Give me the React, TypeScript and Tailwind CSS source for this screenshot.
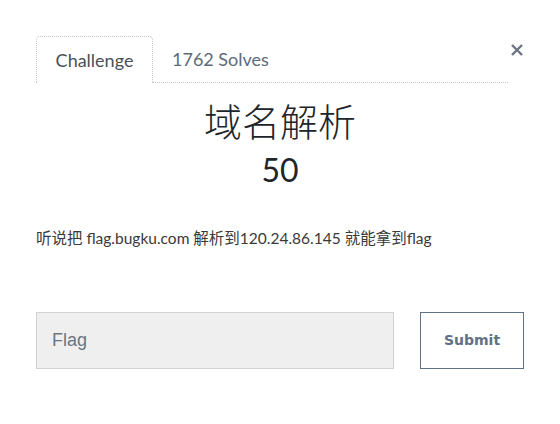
export default function App() {
  return (
    <div className="relative w-[560px] h-[424px] bg-white font-['Lato','Noto_Sans_CJK_SC',sans-serif] text-[#212529]">
      <button className="absolute left-[509px] top-[42px] w-[16px] h-[16px] flex items-center justify-center text-[#6c7580]">
        <svg width="12" height="12" viewBox="0 0 12 12" fill="none" stroke="currentColor" strokeWidth="2.4">
          <path d="M1 1L11 11M11 1L1 11" />
        </svg>
      </button>

      <div className="pl-[36px] pt-[36px] w-[508px]">
        {/* tabs */}
        <div className="flex border-b border-dotted border-[#c8c8c8]">
          <div className="-mb-px h-[47px] w-[117px] flex items-center justify-center border border-b-0 border-dotted border-[#c8c8c8] rounded-t-[4px] bg-white text-[18px] text-[#495057]">
            Challenge
          </div>
          <div className="h-[46px] px-[19px] flex items-center text-[18px] text-[#5c6b7a]">
            1762 Solves
          </div>
        </div>

        <div className="flex flex-col items-center pt-[14px] w-[488px]">
          <h3 className="text-[38px] leading-[48px] font-light text-[#212529]">域名解析</h3>
          <h4 className="mt-[3px] text-[32px] leading-[44px] text-[#212529]">50</h4>
        </div>

        <p className="mt-[36px] text-[15.5px] leading-[20px] text-[#3a3a3a]">
          听说把 flag.bugku.com 解析到120.24.86.145 就能拿到flag
        </p>

        <div className="mt-[64px] flex w-[488px]">
          <div className="w-[358px] h-[57px] bg-[#efefef] border border-[#cfd3d6] flex items-center px-[15px] font-['Liberation_Sans',sans-serif] text-[18px] text-[#6c757d]">
            Flag
          </div>
          <button className="ml-[26px] w-[104px] h-[57px] border border-[#5f7184] bg-white font-['DejaVu_Sans',sans-serif] font-bold text-[14px] text-[#5f7184]">
            Submit
          </button>
        </div>
      </div>
    </div>
  );
}
